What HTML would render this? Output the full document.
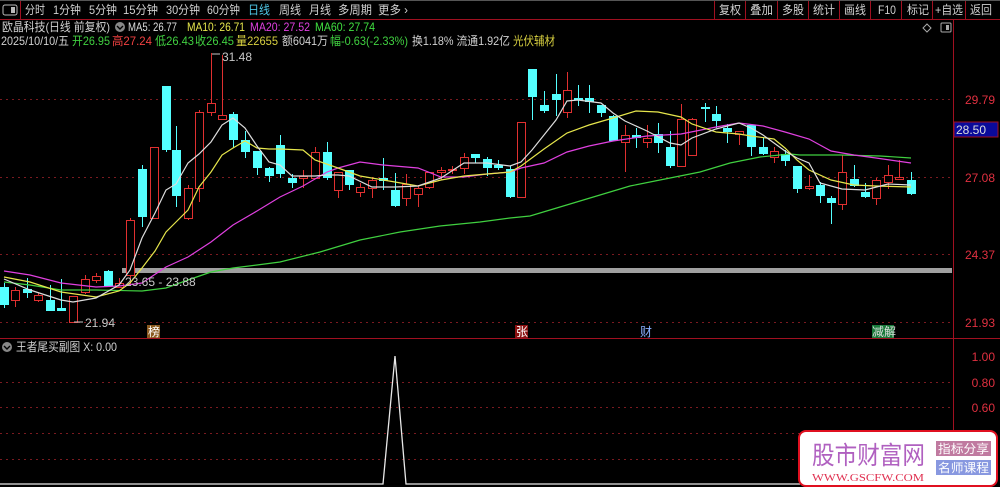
<!DOCTYPE html>
<html><head><meta charset="utf-8"><style>
html,body{margin:0;padding:0;background:#000;width:1000px;height:487px;overflow:hidden}
svg{display:block}
text{font-family:"Liberation Sans","Noto Sans CJK SC",sans-serif;font-size:12px}
</style></head><body>
<svg id="s" width="1000" height="487" viewBox="0 0 1000 487" xmlns="http://www.w3.org/2000/svg">
<rect width="1000" height="487" fill="#000"/>
<rect x="0" y="0" width="1000" height="1" fill="#555"/>
<line x1="0" y1="19.5" x2="1000" y2="19.5" stroke="#a01020"/>
<rect x="3" y="5" width="14" height="10" fill="none" stroke="#bbb" rx="2"/>
<rect x="11" y="7" width="4" height="6" fill="#bbb"/>
<line x1="20.5" y1="1" x2="20.5" y2="19" stroke="#a01020"/>
<g fill="#d0d0d0">
<text x="25" y="14" textLength="20" lengthAdjust="spacingAndGlyphs">分时</text>
<text x="53" y="14" textLength="28" lengthAdjust="spacingAndGlyphs">1分钟</text>
<text x="89" y="14" textLength="28" lengthAdjust="spacingAndGlyphs">5分钟</text>
<text x="123" y="14" textLength="35" lengthAdjust="spacingAndGlyphs">15分钟</text>
<text x="166" y="14" textLength="34" lengthAdjust="spacingAndGlyphs">30分钟</text>
<text x="207" y="14" textLength="33" lengthAdjust="spacingAndGlyphs">60分钟</text>
<text x="248" y="14" fill="#4fc8e8" textLength="22" lengthAdjust="spacingAndGlyphs">日线</text>
<text x="279" y="14" textLength="22" lengthAdjust="spacingAndGlyphs">周线</text>
<text x="309" y="14" textLength="22" lengthAdjust="spacingAndGlyphs">月线</text>
<text x="338" y="14" textLength="34" lengthAdjust="spacingAndGlyphs">多周期</text>
<text x="378" y="14" textLength="30" lengthAdjust="spacingAndGlyphs">更多 ›</text>
</g>
<g stroke="#a01020"><line x1="714.5" y1="1" x2="714.5" y2="19"/><line x1="745.5" y1="1" x2="745.5" y2="19"/><line x1="777.5" y1="1" x2="777.5" y2="19"/><line x1="808.5" y1="1" x2="808.5" y2="19"/><line x1="839.5" y1="1" x2="839.5" y2="19"/><line x1="870.5" y1="1" x2="870.5" y2="19"/><line x1="901.5" y1="1" x2="901.5" y2="19"/><line x1="932.5" y1="1" x2="932.5" y2="19"/><line x1="965.5" y1="1" x2="965.5" y2="19"/></g>
<g fill="#d0d0d0"><text x="719" y="14" textLength="22" lengthAdjust="spacingAndGlyphs">复权</text><text x="750" y="14" textLength="23" lengthAdjust="spacingAndGlyphs">叠加</text><text x="782" y="14" textLength="22" lengthAdjust="spacingAndGlyphs">多股</text><text x="813" y="14" textLength="22" lengthAdjust="spacingAndGlyphs">统计</text><text x="844" y="14" textLength="22" lengthAdjust="spacingAndGlyphs">画线</text><text x="878" y="14" textLength="18" lengthAdjust="spacingAndGlyphs">F10</text><text x="907" y="14" textLength="22" lengthAdjust="spacingAndGlyphs">标记</text><text x="935" y="14" textLength="28" lengthAdjust="spacingAndGlyphs">+自选</text><text x="970" y="14" textLength="22" lengthAdjust="spacingAndGlyphs">返回</text></g>
<text x="2" y="31" fill="#d0d0d0" textLength="108" lengthAdjust="spacingAndGlyphs">欧晶科技(日线 前复权)</text>
<circle cx="120" cy="27" r="5" fill="#888"/><path d="M117 26 L120 29 L123 26" stroke="#000" stroke-width="1.4" fill="none"/>
<text x="128" y="31" fill="#ddd" textLength="49" lengthAdjust="spacingAndGlyphs">MA5: 26.77</text>
<text x="187" y="31" fill="#e6e64c" textLength="58" lengthAdjust="spacingAndGlyphs">MA10: 26.71</text>
<text x="250" y="31" fill="#e040e0" textLength="60" lengthAdjust="spacingAndGlyphs">MA20: 27.52</text>
<text x="315" y="31" fill="#40e040" textLength="60" lengthAdjust="spacingAndGlyphs">MA60: 27.74</text>
<text x="1" y="45" fill="#d0d0d0" textLength="68" lengthAdjust="spacingAndGlyphs">2025/10/10/五</text>
<text x="72" y="45" fill="#40d040" textLength="38" lengthAdjust="spacingAndGlyphs">开26.95</text>
<text x="112" y="45" fill="#f04040" textLength="40" lengthAdjust="spacingAndGlyphs">高27.24</text>
<text x="155" y="45" fill="#40d040" textLength="39" lengthAdjust="spacingAndGlyphs">低26.43</text>
<text x="195" y="45" fill="#40d040" textLength="39" lengthAdjust="spacingAndGlyphs">收26.45</text>
<text x="236" y="45" fill="#d8d040" textLength="42" lengthAdjust="spacingAndGlyphs">量22655</text>
<text x="282" y="45" fill="#d0d0d0" textLength="46" lengthAdjust="spacingAndGlyphs">额6041万</text>
<text x="330" y="45" fill="#40d040" textLength="78" lengthAdjust="spacingAndGlyphs">幅-0.63(-2.33%)</text>
<text x="412" y="45" fill="#d0d0d0" textLength="98" lengthAdjust="spacingAndGlyphs">换1.18% 流通1.92亿</text>
<text x="513" y="45" fill="#d8d040" textLength="42" lengthAdjust="spacingAndGlyphs">光伏辅材</text>
<path d="M927 24 L931 28 L927 32 L923 28 Z" fill="none" stroke="#aaa"/>
<rect x="941" y="23" width="10" height="9" fill="none" stroke="#aaa" rx="1"/><rect x="946" y="25" width="3" height="5" fill="#aaa"/>
<line x1="953.5" y1="20" x2="953.5" y2="487" stroke="#a01020"/>
<line x1="0" y1="338.5" x2="1000" y2="338.5" stroke="#a01020"/>
<g stroke="#7a1a20" stroke-dasharray="2,4"><line x1="0" y1="99.5" x2="953" y2="99.5"/><line x1="0" y1="177.5" x2="953" y2="177.5"/><line x1="0" y1="254.5" x2="953" y2="254.5"/><line x1="0" y1="322.5" x2="953" y2="322.5"/>
<line x1="0" y1="382.5" x2="953" y2="382.5"/><line x1="0" y1="407.5" x2="953" y2="407.5"/><line x1="0" y1="433.5" x2="953" y2="433.5"/><line x1="0" y1="459.5" x2="953" y2="459.5"/></g>
<g fill="#e03040" text-anchor="end"><text x="995" y="104">29.79</text><text x="995" y="182">27.08</text><text x="995" y="259">24.37</text><text x="995" y="327">21.93</text>
<text x="995" y="361">1.00</text><text x="995" y="387">0.80</text><text x="995" y="412">0.60</text></g>
<rect x="954" y="122" width="44" height="15" fill="#0a0a9a" stroke="#a01020"/>
<text x="956" y="134" fill="#ddd">28.50</text>
<rect x="122" y="268" width="830" height="5" fill="#a0a0a0"/>
<g id="cand"></g>
<g fill="none" stroke-width="1.2">
<polyline stroke="#40d040" points="4,282 30,285 61,290 96,290 142,291 166,288 188,280 211,272 233,268 257,265 280,262 320,252 360,240 400,232 440,226 480,222 510,218 530,216 560,207 600,195 630,186 660,180 700,172 730,163 760,157 790,154 800,155 840,155 880,156 911,158"/>
<polyline stroke="#e040e0" points="4,271 30,275 61,283 96,287 119,286 142,283 166,267 188,257 211,242 233,225 257,211 280,197 303,186 327,172 338,168 360,162 383,165 418,168 441,177 464,177 487,174 510,172 521,168 544,163 567,152 589,146 613,141 647,136 681,134 716,127 739,123 763,126 785,132 809,139 831,151 854,155 876,158 911,163"/>
<polyline stroke="#e6e64c" points="4,277 30,282 61,292 96,297 119,291 130,283 142,268 155,251 166,232 176,222 188,210 199,187 211,172 222,155 233,148 245,141 257,148 269,149 280,149 303,150 315,160 338,168 360,176 395,182 418,186 441,180 464,176 487,174 510,172 521,166 544,149 567,133 589,125 613,118 636,111 658,112 681,117 692,124 716,132 739,134 751,136 774,139 785,148 797,160 809,170 831,180 854,185 876,186 911,187"/>
<polyline stroke="#dddddd" points="4,279 30,290 61,300 73,302 96,298 119,285 130,270 142,238 155,213 166,190 176,184 188,163 199,154 211,142 222,125 233,118 245,128 257,146 269,162 280,165 292,176 303,176 315,176 327,175 338,175 349,176 372,187 395,187 418,186 441,178 464,163 487,163 510,166 521,162 532,150 556,120 567,101 578,100 601,103 613,113 625,121 647,131 670,143 681,145 692,138 716,129 739,123 751,128 763,135 774,143 785,151 797,158 809,163 820,183 842,189 865,190 888,184 911,185"/>
</g>
<g fill="#c8c8c8"><text x="222" y="61">31.48</text><text x="125" y="286">23.65 - 23.88</text><text x="85" y="327">21.94</text></g>
<g stroke="#c8c8c8" fill="none"><path d="M212 54 H220"/><path d="M74 322 H83"/></g>
<rect x="147" y="325" width="13" height="13" fill="#8a5a20"/><text x="148" y="336" fill="#fff">榜</text>
<rect x="515" y="325" width="13" height="13" fill="#8a1010"/><text x="516" y="336" fill="#fff">张</text>
<text x="640" y="336" fill="#8ab0ff">财</text>
<rect x="872" y="325" width="22" height="13" fill="#1a7a3a"/><text x="872" y="336" fill="#ddd">减解</text>
<circle cx="7" cy="347" r="5" fill="#888"/><path d="M4 346 L7 349 L10 346" stroke="#000" stroke-width="1.4" fill="none"/>
<text x="16" y="351" fill="#d0d0d0" textLength="101" lengthAdjust="spacingAndGlyphs">王者尾买副图 X: 0.00</text>
<polyline fill="none" stroke="#e8e8e8" stroke-width="1.3" points="0,484 383,484 395,356 406,484 800,484"/>
<rect x="799" y="431" width="198" height="55" rx="7" fill="#fff" stroke="#e01020" stroke-width="2"/>
<text x="812" y="464" fill="#b060c0" textLength="113" lengthAdjust="spacingAndGlyphs" style="font-size:25px;font-family:'Noto Sans CJK SC',sans-serif">股市财富网</text>
<text x="812" y="481" fill="#e03050" textLength="112" lengthAdjust="spacingAndGlyphs" style="font-family:'Liberation Serif',serif;font-size:11px">WWW.GSCFW.COM</text>
<rect x="936" y="441" width="55" height="15" fill="#c07aa0"/><text x="938" y="453" fill="#fff" textLength="51" lengthAdjust="spacingAndGlyphs">指标分享</text>
<rect x="936" y="460" width="55" height="15" fill="#8898e0"/><text x="938" y="472" fill="#fff" textLength="51" lengthAdjust="spacingAndGlyphs">名师课程</text>
</svg>
<script>
var d=[[4,'c',287,305,283,308],[15,'r',290,300,287,307],[27,'c',289,293,278,298],[38,'r',295,300,293,302],[50,'c',300,311,285,311],[61,'c',308,311,279,311],[73,'r',296,322,296,322],[85,'r',279,292,275,294],[96,'r',276,280,273,283],[108,'c',271,286,270,287],[119,'r',283,287,278,288],[130,'r',220,275,218,285],[142,'c',169,217,165,227],[154,'r',147,218,147,218],[166,'c',86,150,86,152],[176,'c',150,196,126,207],[188,'r',188,218,185,220],[199,'r',112,188,110,202],[211,'r',103,112,53,116],[222,'r',115,119,55,119],[233,'c',114,140,112,148],[245,'c',140,152,131,158],[257,'c',151,168,151,175],[269,'c',168,176,167,182],[280,'c',145,174,135,178],[292,'c',178,183,174,188],[303,'r',176,178,170,188],[315,'r',152,178,147,178],[327,'c',152,178,142,180],[338,'r',172,190,172,198],[349,'c',170,185,170,190],[360,'r',187,192,183,197],[372,'r',180,188,177,198],[383,'c',178,181,158,190],[395,'c',190,206,173,207],[406,'r',184,198,174,206],[418,'r',188,194,185,207],[429,'r',172,187,172,189],[441,'r',170,172,167,180],[452,'r',169,170,166,174],[464,'r',157,168,153,174],[475,'c',154,158,154,163],[487,'c',159,168,157,176],[498,'c',165,168,160,170],[510,'c',169,197,166,198],[521,'r',122,197,122,197],[532,'c',69,97,69,120],[544,'c',105,111,91,113],[556,'c',94,100,74,116],[567,'r',90,112,72,118],[578,'c',98,100,85,106],[589,'c',98,102,85,113],[601,'c',105,113,105,117],[613,'c',116,141,115,141],[625,'r',135,142,125,172],[636,'c',135,138,128,148],[647,'r',138,142,125,148],[658,'c',134,143,123,153],[670,'c',147,166,131,168],[681,'r',119,166,104,166],[692,'r',119,155,118,155],[705,'c',107,109,103,122],[716,'c',114,121,106,128],[727,'c',128,132,124,143],[739,'r',131,134,131,145],[751,'c',125,147,125,156],[763,'c',147,154,138,155],[774,'r',151,157,147,163],[785,'c',154,161,150,166],[797,'c',166,189,166,193],[809,'r',186,188,175,190],[820,'c',185,196,182,203],[831,'c',198,203,196,224],[842,'r',172,204,155,210],[854,'c',179,186,165,187],[865,'c',192,197,183,198],[876,'r',180,198,178,205],[888,'r',175,182,165,189],[899,'r',177,179,160,180],[911,'c',180,194,172,195]];
var g=document.getElementById('cand'),h='';
d.forEach(function(c){var x=c[0],col=c[1]=='r'?'#e03030':'#54ffff';
h+='<line x1="'+(x+.5)+'" y1="'+c[4]+'" x2="'+(x+.5)+'" y2="'+c[5]+'" stroke="'+col+'"/>';
var hh=Math.max(c[3]-c[2],1);
if(c[1]=='r')h+='<rect x="'+(x-3.5)+'" y="'+(c[2]+.5)+'" width="8" height="'+hh+'" fill="#000" stroke="'+col+'"/>';
else h+='<rect x="'+(x-4)+'" y="'+c[2]+'" width="9" height="'+hh+'" fill="'+col+'"/>';});
g.innerHTML=h;
</script>
</body></html>
